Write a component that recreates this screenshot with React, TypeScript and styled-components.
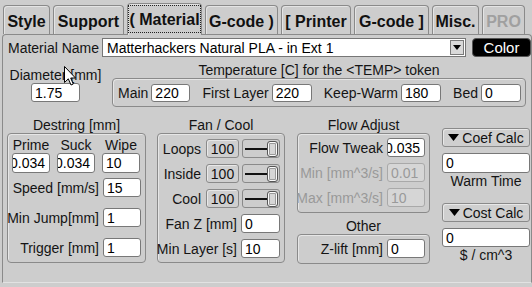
import React from 'react';
import styled, { createGlobalStyle } from 'styled-components';

const GlobalStyle = createGlobalStyle`
  html, body { margin: 0; padding: 0; background: #cdcdcd; }
  body {
    font-family: "Liberation Sans", Arial, sans-serif;
    font-size: 14px;
    color: #141414;
    width: 532px;
    height: 287px;
    overflow: hidden;
  }
  * { box-sizing: border-box; }
`;

const Window = styled.div`
  position: relative;
  width: 532px;
  height: 287px;
  background: #cdcdcd;
  overflow: hidden;
`;

const TabBar = styled.div`
  display: flex;
  align-items: flex-end;
  gap: 3px;
  height: 34px;
  padding-left: 3px;
  position: relative;
  z-index: 2;
`;

const Tab = styled.div<{ $w: number; $active?: boolean; $disabled?: boolean }>`
  width: ${p => p.$w}px;
  height: ${p => (p.$active ? 32 : 29)}px;
  margin-bottom: ${p => (p.$active ? -1 : 0)}px;
  border: 1px solid #8a8a8a;
  border-bottom: none;
  border-radius: 4px 4px 0 0;
  background: #cdcdcd;
  box-shadow: inset 1px 1px 0 #e4e4e4;
  font-weight: bold;
  font-size: 16px;
  color: ${p => (p.$disabled ? '#a0a0a0' : '#111')};
  display: flex;
  align-items: stretch;
  justify-content: center;
  padding: ${p => (p.$active ? '1px 2px 2px' : '2px 0 0')};
  white-space: nowrap;
`;

const TabLabel = styled.span<{ $focus?: boolean }>`
  flex: 1;
  display: flex;
  align-items: center;
  justify-content: center;
  border: 1px dotted ${p => (p.$focus ? '#222' : 'transparent')};
  padding-top: 2px;
`;

const Panel = styled.div`
  position: relative;
  z-index: 1;
  margin-left: 2px;
  width: 530px;
  height: 249px;
  border: 1px solid #8a8a8a;
  border-bottom-color: #e2e2e2;
  border-radius: 4px 4px 0 0;
  padding: 3px 0 0 4px;
`;

const TopRow = styled.div`
  display: flex;
  align-items: center;
  height: 19px;
`;

const RowLabel = styled.span`
  margin-left: 1px;
  white-space: nowrap;
`;

const Combo = styled.div`
  margin-left: auto;
  width: 364px;
  height: 19px;
  background: #fff;
  border: 1px solid #767676;
  display: flex;
  align-items: center;
  padding-left: 4px;
  color: #000;
  white-space: nowrap;
`;

const ComboText = styled.span`
  flex: 1;
`;

const ComboArrow = styled.div`
  width: 14px;
  height: 15px;
  margin-right: 1px;
  background: #d9d9d9;
  border: 1px solid #7a7a7a;
  display: flex;
  align-items: center;
  justify-content: center;
`;

const ColorButton = styled.div`
  margin-left: 6px;
  width: 59px;
  height: 19px;
  background: #000;
  border: 1px solid #555;
  border-radius: 4px;
  color: #fff;
  font-size: 15px;
  display: flex;
  align-items: center;
  justify-content: center;
`;

const SecondRow = styled.div`
  display: flex;
  align-items: flex-start;
  margin-top: 5px;
`;

const DiameterCol = styled.div`
  width: 97px;
  display: flex;
  flex-direction: column;
  align-items: center;
  padding-top: 5px;
`;

const TempCol = styled.div`
  margin-left: 8px;
  width: 414px;
  display: flex;
  flex-direction: column;
`;

const Title = styled.div<{ $mt?: number }>`
  height: 16px;
  line-height: 16px;
  margin-top: ${p => p.$mt ?? 0}px;
  text-align: center;
  white-space: nowrap;
`;

const GroupBox = styled.div<{ $h: number }>`
  height: ${p => p.$h}px;
  border: 1px solid #8a8a8a;
  border-radius: 4px;
  box-shadow: inset 1px 1px 0 #e6e6e6;
`;

const TempBox = styled(GroupBox)`
  display: flex;
  align-items: center;
  justify-content: space-between;
  padding: 0 4px 0 5px;
`;

const Pair = styled.div`
  display: flex;
  align-items: center;
  gap: 3px;
  white-space: nowrap;
`;

const Field = styled.div<{ $w: number; $h?: number; $clip?: boolean; $disabled?: boolean }>`
  width: ${p => p.$w}px;
  height: ${p => p.$h ?? 19}px;
  flex: none;
  background: ${p => (p.$disabled ? '#d6d6d6' : '#fff')};
  border: 1px solid ${p => (p.$disabled ? '#a9a9a9' : '#787878')};
  border-radius: 3px;
  color: ${p => (p.$disabled ? '#9a9a9a' : '#000')};
  display: flex;
  align-items: center;
  justify-content: ${p => (p.$clip ? 'flex-end' : 'flex-start')};
  padding: ${p => (p.$clip ? '0 4px 0 0' : '0 0 0 3px')};
  overflow: hidden;
  white-space: nowrap;
`;

const SectionRow = styled.div`
  display: flex;
  align-items: flex-start;
  margin-top: 10px;
`;

const Column = styled.div<{ $w: number; $ml?: number; $mt?: number }>`
  width: ${p => p.$w}px;
  margin-left: ${p => p.$ml ?? 0}px;
  margin-top: ${p => p.$mt ?? 0}px;
  display: flex;
  flex-direction: column;
`;

const TriGrid = styled.div<{ $h: number; $pt?: number }>`
  display: grid;
  grid-template-columns: 38px 38px 38px;
  column-gap: 7px;
  height: ${p => p.$h}px;
  padding-left: 4px;
  padding-top: ${p => p.$pt ?? 0}px;
  justify-items: center;
  align-items: center;
`;

const LabelRow = styled.div<{ $mt?: number; $gap?: number }>`
  display: flex;
  justify-content: flex-end;
  align-items: center;
  height: 19px;
  gap: ${p => p.$gap ?? 4}px;
  margin-top: ${p => p.$mt ?? 0}px;
  white-space: nowrap;
`;

const StackBox = styled(GroupBox)<{ $pt: number }>`
  display: flex;
  flex-direction: column;
  gap: 6px;
  padding: ${p => p.$pt}px 4px 0 0;
`;

const DestringBox = styled(GroupBox)`
  padding-right: 4px;
`;

const Dim = styled.span<{ $disabled?: boolean }>`
  color: ${p => (p.$disabled ? '#999' : 'inherit')};
`;

const ValueButton = styled.div`
  width: 33px;
  height: 19px;
  border: 1px solid #8a8a8a;
  border-radius: 3px;
  background: #cfcfcf;
  box-shadow: inset 1px 1px 0 #e8e8e8;
  display: flex;
  align-items: center;
  justify-content: center;
  color: #111;
`;

const Slider = styled.div`
  width: 38px;
  height: 19px;
  margin-left: -2px;
  border: 1px solid #8a8a8a;
  border-radius: 3px;
  display: flex;
  align-items: center;
  padding: 0 1px 0 2px;
`;

const SliderLine = styled.div`
  flex: 1;
  height: 2px;
  background: #111;
`;

const SliderThumb = styled.div`
  width: 11px;
  height: 16px;
  border: 1px solid #555;
  border-radius: 3px;
  background: #d6d6d6;
  box-shadow: inset 0 0 0 1px #fafafa, inset 0 0 0 2px #9a9a9a;
`;

const CalcButton = styled.div<{ $mt?: number }>`
  height: 19px;
  margin-top: ${p => p.$mt ?? 0}px;
  border: 1px solid #8a8a8a;
  border-radius: 3px;
  background: #cfcfcf;
  box-shadow: inset 1px 1px 0 #e8e8e8;
  display: flex;
  align-items: center;
  justify-content: center;
  gap: 3px;
  color: #111;
`;

const WideField = styled(Field)<{ $mt?: number }>`
  margin-top: ${p => p.$mt ?? 0}px;
`;

const Caption = styled.div`
  height: 16px;
  line-height: 16px;
  text-align: center;
`;

const Cursor = styled.svg`
  position: absolute;
  left: 64px;
  top: 66px;
  z-index: 5;
`;

const tabs: { label: string; w: number; active?: boolean; disabled?: boolean }[] = [
  { label: 'Style', w: 47 },
  { label: 'Support', w: 71 },
  { label: '( Material', w: 75, active: true },
  { label: 'G-code )', w: 73 },
  { label: '[ Printer', w: 70 },
  { label: 'G-code ]', w: 75 },
  { label: 'Misc.', w: 47 },
  { label: 'PRO', w: 43, disabled: true },
];

const Triangle = () => (
  <svg width="11" height="7" viewBox="0 0 11 7">
    <path d="M0 0 H11 L5.5 7 Z" fill="#000" />
  </svg>
);

const FanRow = ({ label }: { label: string }) => (
  <LabelRow $gap={5}>
    <span>{label}</span>
    <ValueButton>100</ValueButton>
    <Slider>
      <SliderLine />
      <SliderThumb />
    </Slider>
  </LabelRow>
);

export default function App() {
  return (
    <Window>
      <GlobalStyle />
      <TabBar>
        {tabs.map(t => (
          <Tab key={t.label} $w={t.w} $active={t.active} $disabled={t.disabled}>
            <TabLabel $focus={t.active}>{t.label}</TabLabel>
          </Tab>
        ))}
      </TabBar>
      <Panel>
        <TopRow>
          <RowLabel>Material Name</RowLabel>
          <Combo>
            <ComboText>Matterhackers Natural PLA - in Ext 1</ComboText>
            <ComboArrow>
              <svg width="8" height="5" viewBox="0 0 8 5">
                <path d="M0 0 H8 L4 5 Z" fill="#000" />
              </svg>
            </ComboArrow>
          </Combo>
          <ColorButton>Color</ColorButton>
        </TopRow>

        <SecondRow>
          <DiameterCol>
            <Title>Diameter [mm]</Title>
            <Field $w={49}>1.75</Field>
          </DiameterCol>
          <TempCol>
            <Title>Temperature [C] for the &lt;TEMP&gt; token</Title>
            <TempBox $h={29}>
              <Pair>
                <span>Main</span>
                <Field $w={39} $h={18}>220</Field>
              </Pair>
              <Pair>
                <span>First Layer</span>
                <Field $w={40} $h={18}>220</Field>
              </Pair>
              <Pair>
                <span>Keep-Warm</span>
                <Field $w={40} $h={18}>180</Field>
              </Pair>
              <Pair>
                <span>Bed</span>
                <Field $w={40} $h={18}>0</Field>
              </Pair>
            </TempBox>
          </TempCol>
        </SecondRow>

        <SectionRow>
          <Column $w={139}>
            <Title>Destring [mm]</Title>
            <DestringBox $h={130}>
              <TriGrid $h={19} $pt={3}>
                <span>Prime</span>
                <span>Suck</span>
                <span>Wipe</span>
              </TriGrid>
              <TriGrid $h={20}>
                <Field $w={38} $h={20} $clip>0.034</Field>
                <Field $w={38} $h={20} $clip>0.034</Field>
                <Field $w={38} $h={20}>10</Field>
              </TriGrid>
              <LabelRow $mt={5}>
                <span>Speed [mm/s]</span>
                <Field $w={38}>15</Field>
              </LabelRow>
              <LabelRow $mt={11}>
                <span>Min Jump[mm]</span>
                <Field $w={38}>1</Field>
              </LabelRow>
              <LabelRow $mt={11}>
                <span>Trigger [mm]</span>
                <Field $w={38}>1</Field>
              </LabelRow>
            </DestringBox>
          </Column>

          <Column $w={128} $ml={11}>
            <Title>Fan / Cool</Title>
            <StackBox $h={130} $pt={5}>
              <FanRow label="Loops" />
              <FanRow label="Inside" />
              <FanRow label="Cool" />
              <LabelRow>
                <span>Fan Z [mm]</span>
                <Field $w={39}>0</Field>
              </LabelRow>
              <LabelRow>
                <span>Min Layer [s]</span>
                <Field $w={39}>10</Field>
              </LabelRow>
            </StackBox>
          </Column>

          <Column $w={133} $ml={12}>
            <Title>Flow Adjust</Title>
            <StackBox $h={80} $pt={4}>
              <LabelRow>
                <span>Flow Tweak</span>
                <Field $w={38} $clip>0.035</Field>
              </LabelRow>
              <LabelRow>
                <Dim $disabled>Min [mm^3/s]</Dim>
                <Field $w={38} $disabled>0.01</Field>
              </LabelRow>
              <LabelRow>
                <Dim $disabled>Max [mm^3/s]</Dim>
                <Field $w={38} $disabled>10</Field>
              </LabelRow>
            </StackBox>
            <Title $mt={5}>Other</Title>
            <StackBox $h={30} $pt={4}>
              <LabelRow>
                <span>Z-lift [mm]</span>
                <Field $w={38}>0</Field>
              </LabelRow>
            </StackBox>
          </Column>

          <Column $w={88} $ml={12} $mt={11}>
            <CalcButton>
              <Triangle />
              <span>Coef Calc</span>
            </CalcButton>
            <WideField $w={88} $h={20} $mt={6}>0</WideField>
            <Caption>Warm Time</Caption>
            <CalcButton $mt={14}>
              <Triangle />
              <span>Cost Calc</span>
            </CalcButton>
            <WideField $w={88} $h={19} $mt={6}>0</WideField>
            <Caption>$ / cm^3</Caption>
          </Column>
        </SectionRow>
      </Panel>
      <Cursor width="12" height="20" viewBox="0 0 12 20">
        <path d="M0.5 0.5 L0.5 16.5 L4.3 12.8 L7 19 L9.3 18 L6.7 12 L11.5 12 Z" fill="#fff" stroke="#000" strokeWidth="1" />
      </Cursor>
    </Window>
  );
}
